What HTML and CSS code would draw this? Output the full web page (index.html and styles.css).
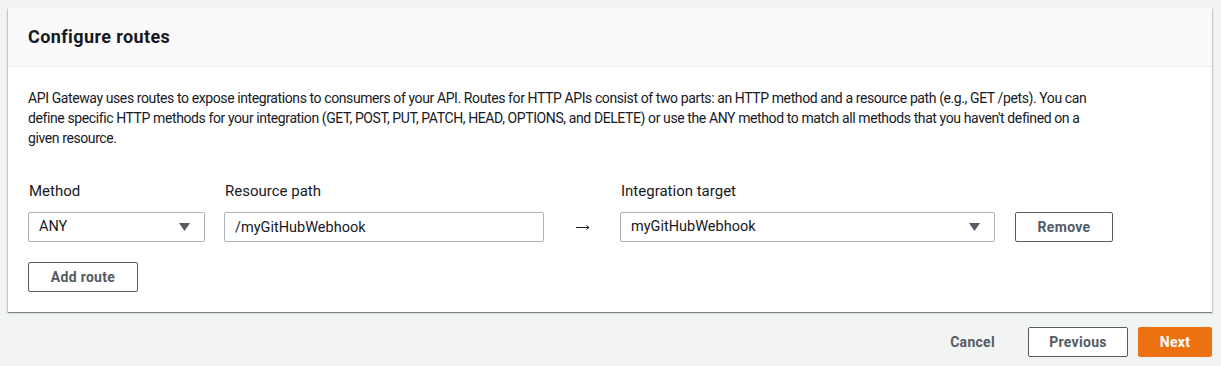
FILE: index.html
```html
<!DOCTYPE html>
<html lang="en">
  <head>
    <meta charset="UTF-8" />
    <meta name="viewport" content="width=device-width, initial-scale=1.0" />
    <title>Configure routes</title>
    <link rel="stylesheet" href="styles.css">
  </head>
  <body>
    <section class="card">
      <header class="card-header">
        <h2>Configure routes</h2>
      </header>
      <div class="card-body">
        <p class="intro">
          API Gateway uses routes to expose integrations to consumers of your API. Routes for HTTP APIs consist of two parts: an HTTP method and a resource path (e.g., GET /pets). You can define specific HTTP methods for your integration (GET, POST, PUT, PATCH, HEAD, OPTIONS, and DELETE) or use the ANY method to match all methods that you haven't defined on a given resource.
        </p>

        <div class="route">
          <div class="field method">
            <label for="method">Method</label>
            <div class="select" id="method">
              <span>ANY</span>
              <svg class="caret" width="11" height="8" viewBox="0 0 11 8"><path d="M0 0h11L5.5 8z" /></svg>
            </div>
          </div>
          <div class="field path">
            <label for="path">Resource path</label>
            <input type="text" id="path" value="/myGitHubWebhook" />
          </div>
          <span class="arrow">
            <svg width="14" height="7" viewBox="0 0 14 7"><path d="M0 3.5h13M10.5 1.5l2.5 2-2.5 2" /></svg>
          </span>
          <div class="field target">
            <label for="target">Integration target</label>
            <div class="select" id="target">
              <span>myGitHubWebhook</span>
              <svg class="caret" width="11" height="8" viewBox="0 0 11 8"><path d="M0 0h11L5.5 8z" /></svg>
            </div>
          </div>
          <button class="btn remove">Remove</button>
        </div>

        <button class="btn add">Add route</button>
      </div>
    </section>

    <footer class="actions">
      <button class="btn link">Cancel</button>
      <button class="btn">Previous</button>
      <button class="btn primary">Next</button>
    </footer>
  </body>
</html>
```

FILE: styles.css
```css
* {
  box-sizing: border-box;
  margin: 0;
  padding: 0;
}
body {
  font-family: Roboto, "Liberation Sans", sans-serif;
  font-size: 14px;
  line-height: 20px;
  color: #16191f;
  background-color: #f2f3f3;
  padding: 8px 9px 0 8px;
}
.card {
  background-color: #fff;
  box-shadow: 0 1px 1px 0 rgba(0, 28, 36, 0.3),
    1px 1px 1px 0 rgba(0, 28, 36, 0.15),
    -1px 1px 1px 0 rgba(0, 28, 36, 0.15);
}
.card-header {
  background-color: #fafafa;
  border-bottom: 1px solid #eaeded;
  padding: 18px 20px;
}
.card-header h2 {
  font-size: 18px;
  line-height: 22px;
  font-weight: 700;
  letter-spacing: 0.4px;
}
.card-body {
  padding: 21px 20px 20px;
}
.intro {
  max-width: 1065px;
  margin-bottom: 32px;
  letter-spacing: -0.4px;
}

.route {
  display: flex;
  align-items: flex-end;
}
.field {
  display: flex;
  flex-direction: column;
}
.field label {
  font-size: 15px;
  line-height: 22px;
  margin-bottom: 10px;
  padding-left: 1px;
}
.method {
  width: 177px;
  margin-right: 19px;
}
.path {
  width: 320px;
}
.target {
  width: 375px;
  margin-right: 20px;
}
.arrow {
  width: 76px;
  height: 30px;
  display: flex;
  align-items: center;
  justify-content: center;
  padding-left: 1px;
}
.arrow svg {
  fill: none;
  stroke: #16191f;
  stroke-width: 1;
}
.select,
input {
  height: 30px;
  border: 1px solid #aab7b8;
  border-radius: 2px;
  padding: 0 10px;
  font: inherit;
  font-size: 14.5px;
  color: #16191f;
  background-color: #fff;
}
.select {
  display: flex;
  align-items: center;
  justify-content: space-between;
  padding-right: 14px;
}
.caret {
  fill: #545b64;
}

.btn {
  height: 30px;
  padding: 0 10px;
  font: inherit;
  font-weight: 700;
  letter-spacing: 0.3px;
  color: #545b64;
  background-color: #fff;
  border: 1px solid #545b64;
  border-radius: 2px;
  cursor: pointer;
}
.remove {
  width: 98px;
}
.add {
  margin-top: 20px;
  width: 110px;
}
.actions {
  display: flex;
  justify-content: flex-end;
  align-items: center;
  gap: 10px;
  margin-top: 15px;
}
.actions .btn {
  width: 100px;
}
.actions .link {
  width: auto;
  border-color: transparent;
  background: none;
  margin-right: 12px;
}
.actions .primary {
  width: 74px;
  background-color: #ec7211;
  border-color: #ec7211;
  color: #fff;
}
```
